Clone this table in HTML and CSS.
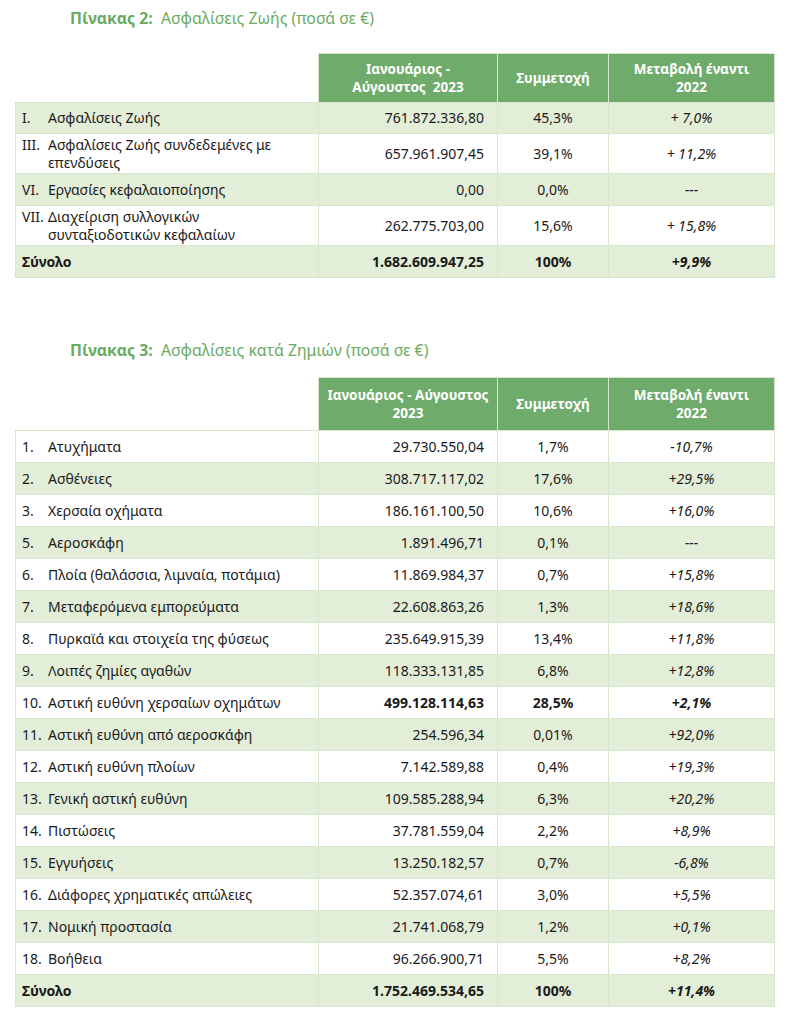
FILE: index.html
```html
<!DOCTYPE html>
<html lang="el">
<head>
<meta charset="utf-8">
<link rel="stylesheet" href="styles.css">
</head>
<body>
<section class="block first">
  <h2 class="title"><b>Πίνακας 2:</b>&nbsp; Ασφαλίσεις Ζωής (ποσά σε €)</h2>
  <table class="tbl t2">
    <colgroup><col class="c1"><col class="c2"><col class="c3"><col class="c4"></colgroup>
    <thead>
      <tr><th class="blank"></th><th>Ιανουάριος -<br>Αύγουστος&nbsp; 2023</th><th>Συμμετοχή</th><th>Μεταβολή έναντι<br>2022</th></tr>
    </thead>
    <tbody>
      <tr class="alt short"><td><div class="lab"><span class="n">I.</span><span>Ασφαλίσεις Ζωής</span></div></td><td class="num">761.872.336,80</td><td class="pct">45,3%</td><td class="chg">+ 7,0%</td></tr>
      <tr class="tall"><td><div class="lab"><span class="n">III.</span><span>Ασφαλίσεις Ζωής συνδεδεμένες με επενδύσεις</span></div></td><td class="num">657.961.907,45</td><td class="pct">39,1%</td><td class="chg">+ 11,2%</td></tr>
      <tr class="alt"><td><div class="lab"><span class="n">VI.</span><span>Εργασίες κεφαλαιοποίησης</span></div></td><td class="num">0,00</td><td class="pct">0,0%</td><td class="chg">---</td></tr>
      <tr class="tall"><td><div class="lab"><span class="n">VII.</span><span>Διαχείριση συλλογικών συνταξιοδοτικών κεφαλαίων</span></div></td><td class="num">262.775.703,00</td><td class="pct">15,6%</td><td class="chg">+ 15,8%</td></tr>
      <tr class="alt total"><td>Σύνολο</td><td class="num">1.682.609.947,25</td><td class="pct">100%</td><td class="chg">+9,9%</td></tr>
    </tbody>
  </table>
</section>

<section class="block second">
  <h2 class="title"><b>Πίνακας 3:</b>&nbsp; Ασφαλίσεις κατά Ζημιών (ποσά σε €)</h2>
  <table class="tbl t3">
    <colgroup><col class="c1"><col class="c2"><col class="c3"><col class="c4"></colgroup>
    <thead>
      <tr><th class="blank"></th><th>Ιανουάριος - Αύγουστος<br>2023</th><th>Συμμετοχή</th><th>Μεταβολή έναντι<br>2022</th></tr>
    </thead>
    <tbody>
      <tr><td><div class="lab"><span class="n">1.</span><span>Ατυχήματα</span></div></td><td class="num">29.730.550,04</td><td class="pct">1,7%</td><td class="chg">-10,7%</td></tr>
      <tr class="alt"><td><div class="lab"><span class="n">2.</span><span>Ασθένειες</span></div></td><td class="num">308.717.117,02</td><td class="pct">17,6%</td><td class="chg">+29,5%</td></tr>
      <tr><td><div class="lab"><span class="n">3.</span><span>Χερσαία οχήματα</span></div></td><td class="num">186.161.100,50</td><td class="pct">10,6%</td><td class="chg">+16,0%</td></tr>
      <tr class="alt"><td><div class="lab"><span class="n">5.</span><span>Αεροσκάφη</span></div></td><td class="num">1.891.496,71</td><td class="pct">0,1%</td><td class="chg">---</td></tr>
      <tr><td><div class="lab"><span class="n">6.</span><span>Πλοία (θαλάσσια, λιμναία, ποτάμια)</span></div></td><td class="num">11.869.984,37</td><td class="pct">0,7%</td><td class="chg">+15,8%</td></tr>
      <tr class="alt"><td><div class="lab"><span class="n">7.</span><span>Μεταφερόμενα εμπορεύματα</span></div></td><td class="num">22.608.863,26</td><td class="pct">1,3%</td><td class="chg">+18,6%</td></tr>
      <tr><td><div class="lab"><span class="n">8.</span><span>Πυρκαϊά και στοιχεία της φύσεως</span></div></td><td class="num">235.649.915,39</td><td class="pct">13,4%</td><td class="chg">+11,8%</td></tr>
      <tr class="alt"><td><div class="lab"><span class="n">9.</span><span>Λοιπές ζημίες αγαθών</span></div></td><td class="num">118.333.131,85</td><td class="pct">6,8%</td><td class="chg">+12,8%</td></tr>
      <tr><td><div class="lab"><span class="n">10.</span><span>Αστική ευθύνη χερσαίων οχημάτων</span></div></td><td class="num b">499.128.114,63</td><td class="pct b">28,5%</td><td class="chg b">+2,1%</td></tr>
      <tr class="alt"><td><div class="lab"><span class="n">11.</span><span>Αστική ευθύνη από αεροσκάφη</span></div></td><td class="num">254.596,34</td><td class="pct">0,01%</td><td class="chg">+92,0%</td></tr>
      <tr><td><div class="lab"><span class="n">12.</span><span>Αστική ευθύνη πλοίων</span></div></td><td class="num">7.142.589,88</td><td class="pct">0,4%</td><td class="chg">+19,3%</td></tr>
      <tr class="alt"><td><div class="lab"><span class="n">13.</span><span>Γενική αστική ευθύνη</span></div></td><td class="num">109.585.288,94</td><td class="pct">6,3%</td><td class="chg">+20,2%</td></tr>
      <tr><td><div class="lab"><span class="n">14.</span><span>Πιστώσεις</span></div></td><td class="num">37.781.559,04</td><td class="pct">2,2%</td><td class="chg">+8,9%</td></tr>
      <tr class="alt"><td><div class="lab"><span class="n">15.</span><span>Εγγυήσεις</span></div></td><td class="num">13.250.182,57</td><td class="pct">0,7%</td><td class="chg">-6,8%</td></tr>
      <tr><td><div class="lab"><span class="n">16.</span><span>Διάφορες χρηματικές απώλειες</span></div></td><td class="num">52.357.074,61</td><td class="pct">3,0%</td><td class="chg">+5,5%</td></tr>
      <tr class="alt"><td><div class="lab"><span class="n">17.</span><span>Νομική προστασία</span></div></td><td class="num">21.741.068,79</td><td class="pct">1,2%</td><td class="chg">+0,1%</td></tr>
      <tr><td><div class="lab"><span class="n">18.</span><span>Βοήθεια</span></div></td><td class="num">96.266.900,71</td><td class="pct">5,5%</td><td class="chg">+8,2%</td></tr>
      <tr class="alt total"><td>Σύνολο</td><td class="num">1.752.469.534,65</td><td class="pct">100%</td><td class="chg">+11,4%</td></tr>
    </tbody>
  </table>
</section>
</body>
</html>
```

FILE: styles.css
```css
html, body {
  margin: 0;
  padding: 0;
  background: #ffffff;
}

body {
  font-family: "Noto Sans", "Open Sans", sans-serif;
  font-size: 14px;
  color: #1a1a1a;
}

.block {
  padding-left: 15px;
}

.first {
  padding-top: 8px;
}

.second {
  padding-top: 62px;
}

.title {
  margin: 0 0 0 55px;
  font-size: 15.8px;
  font-weight: normal;
  color: #6aab5f;
  line-height: 20px;
}

.title b {
  font-weight: bold;
}

.first .title {
  margin-bottom: 25px;
}

.second .title {
  margin-bottom: 17px;
}

.tbl {
  border-collapse: collapse;
  table-layout: fixed;
  width: 759px;
}

.c1 { width: 303px; }
.c2 { width: 179px; }
.c3 { width: 111px; }
.c4 { width: 166px; }

.tbl th {
  background: #6fab6b;
  color: #ffffff;
  font-weight: bold;
  font-size: 13.5px;
  line-height: 18px;
  text-align: center;
  border: 1px solid #d7e6cd;
  padding: 0 4px;
}

.t2 thead tr { height: 49px; }
.t3 thead tr { height: 53px; }

.tbl th.blank {
  background: transparent;
  border: none;
}

.tbl td {
  border: 1px solid #d7e6cd;
  padding: 0 13px 0 6px;
  line-height: 18px;
  vertical-align: middle;
}

.tbl td:first-child {
  padding-right: 30px;
}

.tbl tbody tr {
  height: 32px;
  background: #ffffff;
}

.tbl tbody tr.short {
  height: 31px;
}

.tbl tbody tr.tall {
  height: 40px;
}

.tbl tbody tr.alt {
  background: #e3eed9;
}

.lab {
  display: grid;
  grid-template-columns: 26px 1fr;
}

.num {
  text-align: right;
}

.tbl td.pct {
  text-align: center;
  padding: 0;
}

.tbl td.chg {
  text-align: center;
  font-style: italic;
  padding: 0;
}

.b,
.total td {
  font-weight: bold;
}
```
